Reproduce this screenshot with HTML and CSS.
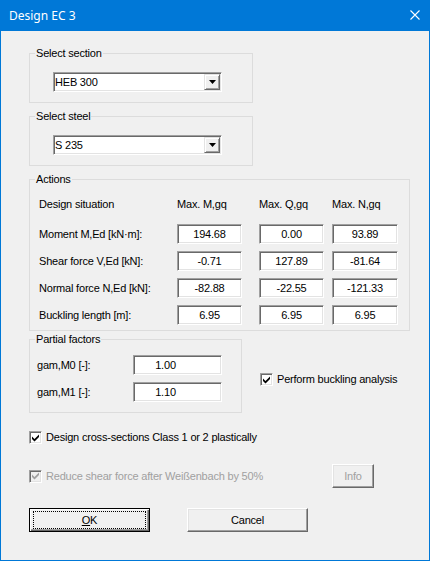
FILE: index.html
```html
<!DOCTYPE html>
<html>
<head>
<meta charset="utf-8">
<link rel="stylesheet" href="styles.css">
</head>
<body>
<div class="window">
  <div class="titlebar">
    <span class="title">Design EC 3</span>
    <svg class="close" width="10" height="10" viewBox="0 0 10 10"><path d="M0.5 0.5 L9.5 9.5 M9.5 0.5 L0.5 9.5" stroke="#fff" stroke-width="1.1" fill="none"/></svg>
  </div>
  <div class="content">
    <fieldset class="group g-select g-section">
      <legend>Select section</legend>
      <div class="combo"><span class="combo-text">HEB 300</span><span class="combo-btn"><svg width="7" height="4" viewBox="0 0 7 4"><path d="M0 0 H7 L3.5 4 Z" fill="#000"/></svg></span></div>
    </fieldset>
    <fieldset class="group g-select g-steel">
      <legend>Select steel</legend>
      <div class="combo"><span class="combo-text">S 235</span><span class="combo-btn"><svg width="7" height="4" viewBox="0 0 7 4"><path d="M0 0 H7 L3.5 4 Z" fill="#000"/></svg></span></div>
    </fieldset>
    <fieldset class="group g-actions">
      <legend>Actions</legend>
      <div class="agrid">
        <div class="hcell">Design situation</div>
        <div class="hcell">Max. M,gq</div>
        <div class="hcell">Max. Q,gq</div>
        <div class="hcell">Max. N,gq</div>

        <div class="lcell">Moment M,Ed [kN·m]:</div>
        <div class="edit">194.68</div>
        <div class="edit">0.00</div>
        <div class="edit last">93.89</div>

        <div class="lcell">Shear force V,Ed [kN]:</div>
        <div class="edit">-0.71</div>
        <div class="edit">127.89</div>
        <div class="edit last">-81.64</div>

        <div class="lcell">Normal force N,Ed [kN]:</div>
        <div class="edit">-82.88</div>
        <div class="edit">-22.55</div>
        <div class="edit last">-121.33</div>

        <div class="lcell">Buckling length [m]:</div>
        <div class="edit">6.95</div>
        <div class="edit">6.95</div>
        <div class="edit last">6.95</div>
      </div>
    </fieldset>
    <div class="partial-row">
      <fieldset class="group g-partial">
        <legend>Partial factors</legend>
        <div class="pgrid">
          <div class="lcell">gam,M0 [-]:</div>
          <div class="edit wide">1.00</div>
          <div class="lcell">gam,M1 [-]:</div>
          <div class="edit wide">1.10</div>
        </div>
      </fieldset>
      <div class="check check-buckling">
        <span class="box"><svg width="7" height="8" viewBox="0 0 7 8"><polygon points="0,2.5 2.5,5 7,0.5 7,3 2.5,7.5 0,5" fill="#000"/></svg></span>
        <span class="ctext">Perform buckling analysis</span>
      </div>
    </div>
    <div class="check check-plastic">
      <span class="box"><svg width="7" height="8" viewBox="0 0 7 8"><polygon points="0,2.5 2.5,5 7,0.5 7,3 2.5,7.5 0,5" fill="#000"/></svg></span>
      <span class="ctext">Design cross-sections Class 1 or 2 plastically</span>
    </div>
    <div class="disabled-row">
      <div class="check disabled">
        <span class="box"><svg width="7" height="8" viewBox="0 0 7 8"><polygon points="0,2.5 2.5,5 7,0.5 7,3 2.5,7.5 0,5" fill="#a0a0a0"/></svg></span>
        <span class="ctext">Reduce shear force after Weißenbach by 50%</span>
      </div>
      <div class="btn info">Info</div>
    </div>
    <div class="buttons">
      <div class="btn default"><span class="focus"><u>O</u>K</span></div>
      <div class="btn">Cancel</div>
    </div>
  </div>
</div>
</body>
</html>
```

FILE: styles.css
```css
* { box-sizing: border-box; }
html, body { margin: 0; padding: 0; background: #f0f0f0; }
body {
  font-family: "Liberation Sans", Arial, sans-serif;
  font-size: 11px;
  letter-spacing: -0.2px;
  color: #000;
}
.window {
  width: 430px;
  height: 561px;
  border: 1px solid #0078d7;
  background: #f0f0f0;
  display: flex;
  flex-direction: column;
  overflow: hidden;
}
.titlebar {
  flex: none;
  height: 30px;
  background: #0078d7;
  display: flex;
  align-items: center;
  padding-left: 8px;
  color: #fff;
  font-family: "Noto Sans", "Open Sans", sans-serif;
  font-size: 12px;
  letter-spacing: 0;
}
.title { line-height: 16px; }
.close {
  margin-left: auto;
  margin-right: 9px;
  align-self: flex-start;
  margin-top: 9px;
}
.content {
  padding-left: 28px;
  display: flex;
  flex-direction: column;
  align-items: flex-start;
}
.group {
  margin: 0;
  padding: 0;
  border: 1px solid #dcdcdc;
  min-width: 0;
}
.group legend {
  padding: 0 1px;
  margin-left: 5px;
  line-height: 13px;
  height: 13px;
}
.g-select {
  width: 224px;
  padding: 12px 0 10px 0;
}
.g-select .combo { margin-left: 23px; }
.g-section { margin-top: 16px; }
.g-steel { margin-top: 7px; }
.combo {
  width: 169px;
  height: 20px;
  display: flex;
  background: #fff;
  border: 1px solid;
  border-color: #a0a0a0 #fff #fff #a0a0a0;
  box-shadow: inset 1px 1px 0 #696969, inset -1px -1px 0 #e3e3e3;
  padding: 1px;
}
.combo-text {
  flex: 1;
  line-height: 16px;
  padding-left: 0;
}
.combo-btn {
  width: 16px;
  height: 16px;
  background: #f0f0f0;
  border: 1px solid;
  border-color: #e3e3e3 #696969 #696969 #e3e3e3;
  box-shadow: inset 1px 1px 0 #fff, inset -1px -1px 0 #a0a0a0;
  display: flex;
  align-items: center;
  justify-content: center;
}
.g-actions {
  margin-top: 7px;
  width: 381px;
  padding: 8px 0 5px 0;
}
.agrid {
  margin-left: 9px;
  display: grid;
  grid-template-columns: 138px 82px 73px 66px;
  grid-template-rows: 23px repeat(4, 20px);
  row-gap: 7px;
  align-items: center;
}
.hcell {
  align-self: start;
  height: 20px;
  line-height: 20px;
  white-space: nowrap;
}
.lcell {
  white-space: nowrap;
  line-height: 20px;
}
.edit {
  width: 65px;
  height: 20px;
  background: #fff;
  border: 1px solid;
  border-color: #a0a0a0 #fff #fff #a0a0a0;
  box-shadow: inset 1px 1px 0 #696969, inset -1px -1px 0 #e3e3e3;
  text-align: center;
  line-height: 18px;
}
.edit.last { width: 66px; }
.edit.wide { width: 89px; padding-right: 24px; }
.partial-row {
  display: flex;
  align-items: flex-start;
  margin-top: 2px;
}
.g-partial {
  width: 213px;
  padding: 9px 0 10px 0;
}
.pgrid {
  margin-left: 7px;
  display: grid;
  grid-template-columns: 96px 89px;
  grid-template-rows: 20px 20px;
  row-gap: 7px;
  align-items: center;
}
.check {
  display: flex;
  align-items: center;
  gap: 4px;
  height: 13px;
  white-space: nowrap;
}
.box {
  width: 13px;
  height: 13px;
  flex: none;
  background: #fff;
  border: 1px solid;
  border-color: #a0a0a0 #fff #fff #a0a0a0;
  box-shadow: inset 1px 1px 0 #696969, inset -1px -1px 0 #e3e3e3;
  display: flex;
  align-items: center;
  justify-content: center;
}
.ctext { line-height: 13px; }
.check-buckling {
  margin-left: 18px;
  margin-top: 40px;
}
.check-plastic { margin-top: 18px; }
.disabled-row {
  margin-top: 20px;
  width: 345px;
  height: 24px;
  display: flex;
  align-items: center;
  justify-content: space-between;
}
.check.disabled { color: #a0a0a0; }
.check.disabled .box { background: #f0f0f0; }
.btn {
  width: 121px;
  height: 24px;
  display: flex;
  align-items: center;
  justify-content: center;
  background: #f0f0f0;
  border: 1px solid;
  border-color: #fff #696969 #696969 #fff;
  box-shadow: inset -1px -1px 0 #a0a0a0, inset 1px 1px 0 #e3e3e3;
}
.btn.info {
  width: 42px;
  color: #a0a0a0;
}
.btn.default {
  border-color: #000;
  box-shadow: inset 1px 1px 0 #fff, inset -1px -1px 0 #696969, inset -2px -2px 0 #a0a0a0;
  padding: 2px 3px;
}
.focus {
  flex: 1;
  align-self: stretch;
  border: 1px dotted #000;
  display: flex;
  align-items: center;
  justify-content: center;
}
.buttons {
  margin-top: 20px;
  display: flex;
  gap: 37px;
}
```
